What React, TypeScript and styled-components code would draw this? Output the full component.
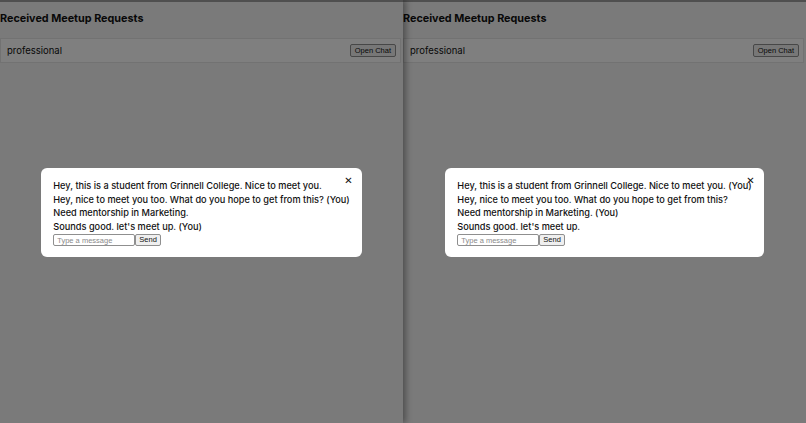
import React from "react";
import styled, { createGlobalStyle } from "styled-components";

const GlobalStyle = createGlobalStyle`
  html, body {
    margin: 0;
    padding: 0;
    height: 100%;
  }
  body {
    font-family: "Inter", "Noto Sans", sans-serif;
    color: #111;
    overflow: hidden;
  }
`;

const SScreen = styled.div`
  display: flex;
  width: 806px;
  height: 423px;
`;

interface WindowStyleProps {
  raised?: boolean;
}

const SWindow = styled.div<WindowStyleProps>`
  position: relative;
  flex: 1;
  height: 100%;
  background: #f5f5f5;
  border-top: 2px solid #4f4f4f;
  box-sizing: border-box;
  z-index: ${({ raised }) => (raised ? 2 : 1)};
  box-shadow: ${({ raised }) =>
    raised ? "3px 0 6px rgba(0, 0, 0, 0.35)" : "none"};
`;

const STitle = styled.h2`
  margin: 0 0 10px;
  padding-top: 8px;
  font-size: 10.8px;
  line-height: 18px;
  font-weight: 700;
`;

const SRequest = styled.div`
  display: flex;
  align-items: center;
  justify-content: space-between;
  height: 25px;
  padding: 0 4px 0 6px;
  margin-right: 2px;
  box-sizing: border-box;
  background: #ffffff;
  border: 1px solid #e4e4e4;
  font-size: 9.5px;
`;

const SSmallButton = styled.button`
  font-family: "Liberation Sans", Arial, sans-serif;
  font-size: 7.5px;
  height: 13px;
  padding: 0 4px;
  line-height: 11px;
  color: #111;
  background: #efefef;
  border: 1px solid #8f8f8f;
  border-radius: 2px;
`;

const SOverlay = styled.div`
  position: absolute;
  inset: 0;
  background: rgba(0, 0, 0, 0.5);
  display: flex;
  align-items: center;
  justify-content: center;
`;

const SModal = styled.div`
  position: relative;
  background: #ffffff;
  border-radius: 6px;
  padding: 11px 12px;
  width: max-content;
`;

const SClose = styled.button`
  position: absolute;
  top: 6px;
  right: 9px;
  padding: 0;
  border: none;
  background: none;
  font-family: "DejaVu Sans", sans-serif;
  font-size: 10px;
  font-weight: 700;
  line-height: 14px;
  color: #111;
`;

const SMessage = styled.div`
  font-size: 9.2px;
  font-weight: 500;
  line-height: 13.5px;
  white-space: nowrap;
`;

const SComposer = styled.form`
  display: flex;
  margin-top: 1px;
`;

const SInput = styled.input`
  width: 82px;
  height: 12px;
  box-sizing: border-box;
  padding: 0 3px;
  font-family: "Liberation Sans", Arial, sans-serif;
  font-size: 7.5px;
  border: 1px solid #8f8f8f;
  border-radius: 2px;
  &::placeholder {
    color: #8a8a8a;
  }
`;

const SSend = styled(SSmallButton)`
  height: 12px;
  line-height: 10px;
  padding: 0 3px;
  margin-left: 0;
`;

interface ChatMessage {
  text: string;
  mine: boolean;
}

interface ChatWindowProps {
  raised?: boolean;
  messages: ChatMessage[];
}

const ChatWindow = ({ raised, messages }: ChatWindowProps) => (
  <SWindow raised={raised}>
    <STitle>Received Meetup Requests</STitle>
    <SRequest>
      <span>professional</span>
      <SSmallButton>Open Chat</SSmallButton>
    </SRequest>
    <SOverlay>
      <SModal>
        <SClose aria-label="Close">✕</SClose>
        {messages.map((m, i) => (
          <SMessage key={i}>
            {m.text}
            {m.mine ? " (You)" : ""}
          </SMessage>
        ))}
        <SComposer onSubmit={(e) => e.preventDefault()}>
          <SInput placeholder="Type a message" />
          <SSend type="submit">Send</SSend>
        </SComposer>
      </SModal>
    </SOverlay>
  </SWindow>
);

const LINES = [
  "Hey, this is a student from Grinnell College. Nice to meet you.",
  "Hey, nice to meet you too. What do you hope to get from this?",
  "Need mentorship in Marketing.",
  "Sounds good. let's meet up.",
];

const App = () => (
  <>
    <GlobalStyle />
    <SScreen>
      <ChatWindow
        raised
        messages={LINES.map((text, i) => ({ text, mine: i % 2 === 1 }))}
      />
      <ChatWindow
        messages={LINES.map((text, i) => ({ text, mine: i % 2 === 0 }))}
      />
    </SScreen>
  </>
);

export default App;
